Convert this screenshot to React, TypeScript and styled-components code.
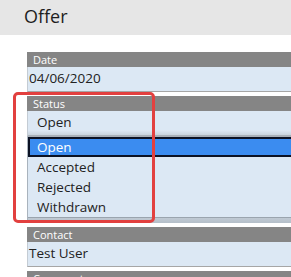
import React from "react";
import styled, { createGlobalStyle } from "styled-components";

const GlobalStyle = createGlobalStyle`
  body {
    margin: 0;
    background: #ffffff;
    font-family: "Open Sans", "Noto Sans", sans-serif;
    overflow: hidden;
  }
`;

const statusOptions = ["Open", "Accepted", "Rejected", "Withdrawn"];

const App: React.FC = () => {
  return (
    <Page>
      <GlobalStyle />
      <Header>Offer</Header>
      <Form>
        <Field>
          <Label>Date</Label>
          <Value>04/06/2020</Value>
        </Field>
        <Field>
          <Label>Status</Label>
          <Select>Open</Select>
          <OptionList>
            {statusOptions.map((option, i) => (
              <Option key={option} $selected={i === 0}>
                {option}
              </Option>
            ))}
            <ListFooter />
          </OptionList>
          <Highlight />
        </Field>
        <Field>
          <Label>Contact</Label>
          <Value>Test User</Value>
        </Field>
        <Field>
          <Label>Comments</Label>
          <Value />
        </Field>
      </Form>
    </Page>
  );
};

export default App;

const Page = styled.div`
  width: 291px;
  height: 277px;
  overflow: hidden;
`;

const Header = styled.div`
  height: 35px;
  box-sizing: border-box;
  padding: 3px 0 0 24px;
  background: #e6e6e6;
  color: #1e1e1e;
  font-size: 18px;
  line-height: 26px;
`;

const Form = styled.div`
  display: flex;
  flex-direction: column;
  gap: 4px;
  padding: 17px 0 0 27px;
`;

const Field = styled.div`
  position: relative;
  display: flex;
  flex-direction: column;
`;

const Label = styled.div`
  height: 15px;
  padding-left: 6px;
  background: #858585;
  color: #ffffff;
  font-size: 11px;
  line-height: 15px;
`;

const Value = styled.div`
  height: 24px;
  padding-left: 1px;
  background: #dce8f4;
  border-left: 1px solid #c4ccd4;
  border-bottom: 1px solid #a6a6a6;
  color: #222222;
  font-size: 13.5px;
  line-height: 22px;
`;

const Select = styled.div`
  height: 24px;
  padding-left: 9px;
  background: linear-gradient(#dce8f4 80%, #c9d3dd);
  border-left: 1px solid #c4ccd4;
  border-bottom: 2px solid #a9b1b9;
  color: #222222;
  font-size: 13.5px;
  line-height: 22px;
`;

const OptionList = styled.div`
  display: flex;
  flex-direction: column;
  background: #dce8f4;
  border-left: 1px solid #a9b3bd;
`;

const Option = styled.div<{ $selected?: boolean }>`
  height: 20px;
  box-sizing: border-box;
  padding-left: 7px;
  border: 2px solid ${(p) => (p.$selected ? "#0b1224" : "transparent")};
  border-right: none;
  background: ${(p) => (p.$selected ? "#3b8cf0" : "transparent")};
  color: ${(p) => (p.$selected ? "#ffffff" : "#222222")};
  font-size: 13.5px;
  line-height: 16px;
`;

const ListFooter = styled.div`
  height: 5px;
  background: linear-gradient(#c0cad4, #b4bec8);
  border-top: 1px solid #9aa4ae;
`;

const Highlight = styled.div`
  position: absolute;
  top: -4px;
  left: -14px;
  width: 142px;
  height: 131px;
  box-sizing: border-box;
  border: 3px solid #e2403f;
  border-radius: 5px;
  pointer-events: none;
`;
